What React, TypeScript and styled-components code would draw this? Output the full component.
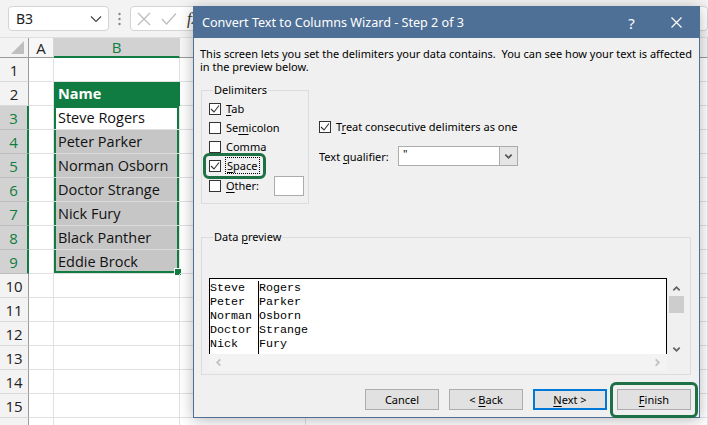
import styled, { createGlobalStyle } from 'styled-components';

const GlobalStyle = createGlobalStyle`
  html, body {
    margin: 0;
    padding: 0;
    background: #fff;
  }
  body {
    width: 708px;
    height: 425px;
    overflow: hidden;
    font-family: "Noto Sans", "Open Sans", sans-serif;
  }
`;

const GREEN = '#107c41';

const Page = styled.div`
  position: relative;
  width: 708px;
  height: 425px;
  overflow: hidden;
  background: #fff;
`;

/* ---------- formula bar ---------- */

const FormulaBar = styled.div`
  height: 38px;
  box-sizing: border-box;
  display: flex;
  align-items: center;
  padding-left: 8px;
  background: #f3f3f3;
  border-bottom: 1px solid #e0e0e0;
`;

const NameBox = styled.div`
  width: 101px;
  height: 25px;
  box-sizing: border-box;
  display: flex;
  align-items: center;
  justify-content: space-between;
  padding: 0 6px 0 7px;
  background: #fff;
  border: 1px solid #d4d4d4;
  border-radius: 4px;
  font-size: 14px;
  color: #222;
`;

const Grip = styled.div`
  width: 21px;
  display: flex;
  justify-content: center;
`;

const FormulaBox = styled.div`
  flex: 1;
  height: 25px;
  box-sizing: border-box;
  display: flex;
  align-items: center;
  gap: 10px;
  padding-left: 6px;
  background: #fff;
  border: 1px solid #d4d4d4;
  border-radius: 4px;
  font-family: "Liberation Serif", serif;
  font-style: italic;
  font-size: 16px;
  color: #333;
`;

/* ---------- grid ---------- */

const Sheet = styled.div`
  font-family: "Open Sans", "Noto Sans", sans-serif;
`;

const HeadRow = styled.div`
  display: flex;
  height: 20px;
`;

const Corner = styled.div`
  width: 29px;
  flex: none;
  box-sizing: border-box;
  display: flex;
  align-items: flex-end;
  justify-content: flex-end;
  padding: 0 4px 3px 0;
  background: #f3f3f3;
  border-right: 1px solid #9b9b9b;
  border-bottom: 1px solid #9b9b9b;
`;

const ColHead = styled.div<{ $w?: number; $sel?: boolean }>`
  ${(p) => (p.$w ? `width: ${p.$w}px; flex: none;` : 'flex: 1;')}
  box-sizing: border-box;
  display: flex;
  align-items: center;
  justify-content: center;
  font-size: 15px;
  background: ${(p) => (p.$sel ? '#d2d2d2' : '#f7f7f7')};
  color: ${(p) => (p.$sel ? GREEN : '#222')};
  border-right: 1px solid #d6d6d6;
  border-bottom: ${(p) => (p.$sel ? `2px solid ${GREEN}` : '1px solid #9b9b9b')};
`;

const GridRow = styled.div`
  display: flex;
  height: 24px;
`;

const RowHead = styled.div<{ $sel?: boolean }>`
  width: 29px;
  flex: none;
  box-sizing: border-box;
  display: flex;
  align-items: center;
  justify-content: center;
  font-size: 15px;
  background: ${(p) => (p.$sel ? '#d2d2d2' : '#f3f3f3')};
  color: ${(p) => (p.$sel ? GREEN : '#222')};
  border-bottom: 1px solid ${(p) => (p.$sel ? '#bdbdbd' : '#dadada')};
  border-right: ${(p) => (p.$sel ? `2px solid ${GREEN}` : '1px solid #9b9b9b')};
`;

type Edge = 'top' | 'mid' | 'bottom';

const Cell = styled.div<{ $w?: number; $kind?: 'head' | 'sel'; $edge?: Edge }>`
  ${(p) => (p.$w ? `width: ${p.$w}px; flex: none;` : 'flex: 1;')}
  position: relative;
  box-sizing: border-box;
  display: flex;
  align-items: center;
  padding-left: 4px;
  font-size: 14.5px;
  color: #111;
  border-right: 1px solid #e1e1e1;
  border-bottom: 1px solid #e1e1e1;
  ${(p) =>
    p.$kind === 'head' &&
    `background: ${GREEN}; color: #fff; font-weight: 700; border-color: ${GREEN};`}
  ${(p) => p.$kind === 'sel' && 'background: #c6c6c6; border-bottom-color: #dcdcdc;'}
  ${(p) =>
    p.$edge &&
    `box-shadow: inset 2px 0 0 ${GREEN}, inset -2px 0 0 ${GREEN}${
      p.$edge === 'top' ? `, inset 0 2px 0 ${GREEN}` : ''
    }${p.$edge === 'bottom' ? `, inset 0 -2px 0 ${GREEN}` : ''};`}
`;

const FillHandle = styled.span`
  position: absolute;
  right: -3px;
  bottom: -3px;
  width: 6px;
  height: 6px;
  background: ${GREEN};
  border: 1px solid #fff;
`;

/* ---------- dialog ---------- */

const Dialog = styled.div`
  position: absolute;
  left: 193px;
  top: 6px;
  width: 507px;
  height: 412px;
  box-sizing: border-box;
  display: flex;
  flex-direction: column;
  background: #f0f0f0;
  border: 1px solid #4e7096;
  box-shadow: 0 2px 14px rgba(0, 0, 0, 0.28);
  font-family: "Noto Sans", "Open Sans", sans-serif;
  font-size: 11px;
  color: #000;
`;

const TitleBar = styled.div`
  height: 31px;
  flex: none;
  display: flex;
  align-items: center;
  padding-left: 8px;
  background: #4e7096;
  color: #fff;
  font-size: 12.6px;
`;

const Title = styled.div`
  flex: 1;
`;

const TitleButton = styled.div`
  width: 45px;
  height: 31px;
  display: flex;
  align-items: center;
  justify-content: center;
  font-size: 15px;
`;

const Body = styled.div`
  flex: 1;
  display: flex;
  flex-direction: column;
  padding: 9px 8px 0 7px;
`;

const Intro = styled.div`
  margin-left: -1px;
`;

const IntroLine = styled.div`
  height: 13px;
  line-height: 13px;
  white-space: pre;
`;

const TopSection = styled.div`
  display: flex;
  gap: 10px;
  margin-top: 10px;
`;

const Group = styled.fieldset<{ $w: number; $h: number; $pt: number }>`
  width: ${(p) => p.$w}px;
  height: ${(p) => p.$h}px;
  box-sizing: border-box;
  margin: 0;
  padding: ${(p) => p.$pt}px 0 0 7px;
  min-width: 0;
  border: 1px solid #dcdcdc;
  display: flex;
  flex-direction: column;
`;

const Legend = styled.legend`
  padding: 0 1px;
  margin-left: 4px;
  line-height: 14px;
`;

const CheckRow = styled.label<{ $h?: number; $mark?: boolean }>`
  position: relative;
  display: flex;
  align-items: center;
  gap: 5px;
  height: ${(p) => p.$h ?? 19}px;
  ${(p) =>
    p.$mark &&
    `align-self: flex-start;
    &::after {
      content: '';
      position: absolute;
      left: -6px;
      top: -3px;
      width: 63px;
      height: 26px;
      box-sizing: border-box;
      border: 3px solid #1e7145;
      border-radius: 6px;
    }`}
`;

const Box = styled.span`
  width: 12px;
  height: 12px;
  flex: none;
  box-sizing: border-box;
  display: inline-flex;
  align-items: center;
  justify-content: center;
  background: #fff;
  border: 1px solid #333;
`;

const Focus = styled.span`
  outline: 1px dotted #000;
  outline-offset: 0;
  padding: 0 2px 0 1px;
`;

const U = styled.span`
  text-decoration: underline;
  text-underline-offset: 2px;
`;

const SmallInput = styled.span`
  width: 30px;
  height: 20px;
  box-sizing: border-box;
  margin-left: 10px;
  background: #fff;
  border: 1px solid #acacac;
`;

const Options = styled.div`
  display: flex;
  flex-direction: column;
  padding-top: 34px;
`;

const QualifierRow = styled.div`
  display: flex;
  align-items: center;
  margin-top: 10px;
`;

const QualifierLabel = styled.span`
  width: 79px;
`;

const Combo = styled.div`
  width: 120px;
  height: 20px;
  box-sizing: border-box;
  display: flex;
  background: #fff;
  border: 1px solid #acacac;
`;

const ComboValue = styled.span`
  flex: 1;
  padding-left: 4px;
  line-height: 14px;
`;

const ComboArrow = styled.span`
  width: 17px;
  display: flex;
  align-items: center;
  justify-content: center;
  background: #e5e5e5;
  border-left: 1px solid #acacac;
`;

const PreviewSection = styled.div`
  margin-top: 26px;
`;

const PreviewFrame = styled.div`
  display: flex;
  flex-direction: column;
  width: 477px;
`;

const PreviewTop = styled.div`
  display: flex;
  height: 76px;
`;

const PreviewBox = styled.div`
  flex: 1;
  display: flex;
  box-sizing: border-box;
  background: #fff;
  border: 1px solid #000;
  border-bottom: none;
  font-family: "Liberation Mono", monospace;
  font-size: 11.67px;
  line-height: 14px;
  color: #000;
  padding-top: 2px;
`;

const PreviewCol = styled.div<{ $w?: number }>`
  ${(p) => (p.$w ? `width: ${p.$w}px; border-right: 1px solid #000;` : 'flex: 1;')}
  white-space: pre;
`;

const VScroll = styled.div`
  width: 19px;
  display: flex;
  flex-direction: column;
  align-items: center;
  padding-top: 6px;
`;

const Thumb = styled.div`
  width: 15px;
  height: 17px;
  margin-top: 3px;
  background: #cdcdcd;
`;

const Spacer = styled.div`
  flex: 1;
`;

const HScroll = styled.div`
  height: 17px;
  width: 458px;
  display: flex;
  align-items: center;
  justify-content: space-between;
  padding: 0 5px 0 5px;
  box-sizing: border-box;
  background: #f3f3f3;
`;

const ButtonRow = styled.div`
  display: flex;
  justify-content: flex-end;
  gap: 10px;
  margin-top: 14px;
`;

const Button = styled.div<{ $primary?: boolean; $mark?: boolean }>`
  position: relative;
  width: 74px;
  height: 21px;
  box-sizing: border-box;
  display: flex;
  align-items: center;
  justify-content: center;
  white-space: pre;
  background: #e1e1e1;
  border: ${(p) => (p.$primary ? '2px solid #0078d7' : '1px solid #adadad')};
  ${(p) =>
    p.$mark &&
    `&::after {
      content: '';
      position: absolute;
      left: -8px;
      top: -8px;
      width: 88px;
      height: 36px;
      box-sizing: border-box;
      border: 3px solid #1e7145;
      border-radius: 6px;
    }`}
`;

/* ---------- icons ---------- */

const Check = () => (
  <svg width="10" height="10" viewBox="0 0 10 10">
    <polyline points="1,5 4,8 9,1.5" fill="none" stroke="#333" strokeWidth="1.1" />
  </svg>
);

const Chevron = ({ dir, color, size = 9 }: { dir: 'up' | 'down' | 'left' | 'right'; color: string; size?: number }) => {
  const rot = { down: 0, up: 180, left: 90, right: -90 }[dir];
  return (
    <svg width={size} height={size} viewBox="0 0 10 10" style={{ transform: `rotate(${rot}deg)` }}>
      <polyline points="1.5,3 5,6.5 8.5,3" fill="none" stroke={color} strokeWidth="2" />
    </svg>
  );
};

const CheckBox = ({ on }: { on?: boolean }) => <Box>{on && <Check />}</Box>;

const names: Record<number, string> = {
  3: 'Steve Rogers',
  4: 'Peter Parker',
  5: 'Norman Osborn',
  6: 'Doctor Strange',
  7: 'Nick Fury',
  8: 'Black Panther',
  9: 'Eddie Brock',
};

const rows = Array.from({ length: 16 }, (_, i) => i + 1);

export default function App() {
  return (
    <Page>
      <GlobalStyle />
      <FormulaBar>
        <NameBox>
          B3
          <svg width="12" height="8" viewBox="0 0 12 8">
            <polyline points="1,1.5 6,6.5 11,1.5" fill="none" stroke="#444" strokeWidth="1.2" />
          </svg>
        </NameBox>
        <Grip>
          <svg width="3" height="14" viewBox="0 0 3 14">
            <circle cx="1.5" cy="2" r="1.2" fill="#888" />
            <circle cx="1.5" cy="7" r="1.2" fill="#888" />
            <circle cx="1.5" cy="12" r="1.2" fill="#888" />
          </svg>
        </Grip>
        <FormulaBox>
          <svg width="14" height="14" viewBox="0 0 14 14">
            <path d="M1 1 L13 13 M13 1 L1 13" stroke="#bbb" strokeWidth="1.2" />
          </svg>
          <svg width="16" height="14" viewBox="0 0 16 14">
            <polyline points="1,7 5.5,12 15,1.5" fill="none" stroke="#bbb" strokeWidth="1.2" />
          </svg>
          <span>fx</span>
        </FormulaBox>
      </FormulaBar>

      <Sheet>
        <HeadRow>
          <Corner>
            <svg width="13" height="13" viewBox="0 0 13 13">
              <polygon points="13,0 13,13 0,13" fill="#bfbfbf" />
            </svg>
          </Corner>
          <ColHead $w={25}>A</ColHead>
          <ColHead $w={126} $sel>
            B
          </ColHead>
          <ColHead $w={126}>C</ColHead>
          <ColHead>D</ColHead>
        </HeadRow>
        {rows.map((r) => {
          const sel = r >= 3 && r <= 9;
          const edge: Edge | undefined = sel ? (r === 3 ? 'top' : r === 9 ? 'bottom' : 'mid') : undefined;
          return (
            <GridRow key={r}>
              <RowHead $sel={sel}>{r}</RowHead>
              <Cell $w={25} />
              <Cell $w={126} $kind={r === 2 ? 'head' : sel && r > 3 ? 'sel' : undefined} $edge={edge}>
                {r === 2 ? 'Name' : names[r]}
                {r === 9 && <FillHandle />}
              </Cell>
              <Cell $w={126} />
              <Cell />
            </GridRow>
          );
        })}
      </Sheet>

      <Dialog>
        <TitleBar>
          <Title>Convert Text to Columns Wizard - Step 2 of 3</Title>
          <TitleButton>?</TitleButton>
          <TitleButton>
            <svg width="11" height="11" viewBox="0 0 11 11">
              <path d="M0.5 0.5 L10.5 10.5 M10.5 0.5 L0.5 10.5" stroke="#fff" strokeWidth="1.2" />
            </svg>
          </TitleButton>
        </TitleBar>
        <Body>
          <Intro>
            <IntroLine>
              {'This screen lets you set the delimiters your data contains.  You can see how your text is affected'}
            </IntroLine>
            <IntroLine>in the preview below.</IntroLine>
          </Intro>

          <TopSection>
            <Group $w={108} $h={121} $pt={2}>
              <Legend>Delimiters</Legend>
              <CheckRow>
                <CheckBox on />
                <span>
                  <U>T</U>ab
                </span>
              </CheckRow>
              <CheckRow>
                <CheckBox />
                <span>
                  Se<U>m</U>icolon
                </span>
              </CheckRow>
              <CheckRow>
                <CheckBox />
                <span>Comma</span>
              </CheckRow>
              <CheckRow $mark>
                <CheckBox on />
                <Focus>
                  <U>S</U>pace
                </Focus>
              </CheckRow>
              <CheckRow $h={21}>
                <CheckBox />
                <span>
                  <U>O</U>ther:
                </span>
                <SmallInput />
              </CheckRow>
            </Group>

            <Options>
              <CheckRow>
                <CheckBox on />
                <span>
                  T<U>r</U>eat consecutive delimiters as one
                </span>
              </CheckRow>
              <QualifierRow>
                <QualifierLabel>
                  Text <U>q</U>ualifier:
                </QualifierLabel>
                <Combo>
                  <ComboValue>"</ComboValue>
                  <ComboArrow>
                    <Chevron dir="down" color="#555" size={9} />
                  </ComboArrow>
                </Combo>
              </QualifierRow>
            </Options>
          </TopSection>

          <PreviewSection>
            <Group $w={490} $h={145} $pt={34}>
              <Legend>
                Data <U>p</U>review
              </Legend>
              <PreviewFrame>
                <PreviewTop>
                  <PreviewBox>
                    <PreviewCol $w={48}>{'Steve\nPeter\nNorman\nDoctor\nNick'}</PreviewCol>
                    <PreviewCol>{'Rogers\nParker\nOsborn\nStrange\nFury'}</PreviewCol>
                  </PreviewBox>
                  <VScroll>
                    <Chevron dir="up" color="#606060" size={9} />
                    <Thumb />
                    <Spacer />
                    <Chevron dir="down" color="#606060" size={9} />
                  </VScroll>
                </PreviewTop>
                <HScroll>
                  <Chevron dir="left" color="#c2c2c2" size={9} />
                  <Chevron dir="right" color="#c2c2c2" size={9} />
                </HScroll>
              </PreviewFrame>
            </Group>
          </PreviewSection>

          <ButtonRow>
            <Button>Cancel</Button>
            <Button>
              <span>
                {'< '}
                <U>B</U>ack
              </span>
            </Button>
            <Button $primary>
              <span>
                <U>N</U>ext {'>'}
              </span>
            </Button>
            <Button $mark>
              <span>
                <U>F</U>inish
              </span>
            </Button>
          </ButtonRow>
        </Body>
      </Dialog>
    </Page>
  );
}
